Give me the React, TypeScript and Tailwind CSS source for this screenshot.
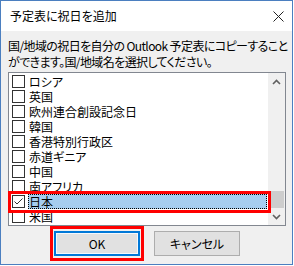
import React from "react";

const countries = [
  "ロシア",
  "英国",
  "欧州連合創設記念日",
  "韓国",
  "香港特別行政区",
  "赤道ギニア",
  "中国",
  "南アフリカ",
  "日本",
  "米国",
];

const Checkbox = ({ checked }: { checked: boolean }) => (
  <div className="w-[13px] h-[13px] shrink-0 border border-[#333333] bg-white flex items-center justify-center">
    {checked && (
      <svg width="11" height="11" viewBox="0 0 11 11">
        <polyline points="1.5,5.5 4,8 9.5,2.5" fill="none" stroke="#333333" strokeWidth="1" />
      </svg>
    )}
  </div>
);

const Chevron = ({ up }: { up: boolean }) => (
  <svg width="9" height="6" viewBox="0 0 9 6">
    <polyline
      points={up ? "1,5 4.5,1.5 8,5" : "1,1 4.5,4.5 8,1"}
      fill="none"
      stroke="#606060"
      strokeWidth="1.6"
    />
  </svg>
);

export default function App() {
  const selected = "日本";

  return (
    <div className="relative w-[293px] h-[265px] border border-[#4b7fc0] bg-[#f0f0f0] flex flex-col font-['Noto_Sans_CJK_JP',sans-serif] [font-feature-settings:'palt'] text-black">
      {/* title bar */}
      <div className="h-[30px] shrink-0 bg-white flex items-center justify-between pl-[9px] pr-[8px]">
        <span className="text-[12px] leading-[16px]">予定表に祝日を追加</span>
        <svg width="11" height="11" viewBox="0 0 11 11">
          <path d="M0.5 0.5 L10.5 10.5 M10.5 0.5 L0.5 10.5" stroke="#222222" strokeWidth="1" />
        </svg>
      </div>

      <div className="flex-1 flex flex-col pl-[7px] pr-[6px] pt-[7px]">
        <p className="text-[12px] leading-[16px] tracking-[-0.6px] whitespace-nowrap">
          国/地域の祝日を自分の Outlook 予定表にコピーすること
          <br />
          ができます。国/地域名を選択してください。
        </p>

        {/* list box */}
        <div className="mt-[2px] h-[154px] border border-[#828790] bg-white flex">
          <div className="flex-1 overflow-hidden pt-[1px]">
            {countries.map((name) => {
              const isSel = name === selected;
              return (
                <div key={name} className="h-[15px] flex items-center pl-[3px] pr-[1px]">
                  <Checkbox checked={isSel} />
                  <div
                    className={
                      isSel
                        ? "ml-[3px] flex-1 h-[15px] border border-dotted border-black bg-[#a6cdef] text-[12px] leading-[13px] whitespace-nowrap"
                        : "ml-[3px] flex-1 h-[15px] border border-transparent text-[12px] leading-[13px] whitespace-nowrap"
                    }
                  >
                    {name}
                  </div>
                </div>
              );
            })}
          </div>
          <div className="w-[17px] bg-[#f0f0f0] flex flex-col">
            <div className="h-[17px] flex items-center justify-center">
              <Chevron up />
            </div>
            <div className="flex-1 flex flex-col justify-end px-[1px]">
              <div className="h-[17px] bg-[#cdcdcd]" />
            </div>
            <div className="h-[17px] flex items-center justify-center">
              <Chevron up={false} />
            </div>
          </div>
        </div>

        {/* buttons */}
        <div className="mt-[5px] flex justify-center gap-[14px]">
          <button className="w-[86px] h-[25px] border-2 border-[#0078d7] bg-[#e1e1e1] shadow-[inset_0_0_0_1px_#f4f8fc] text-[12px] leading-[16px]">
            OK
          </button>
          <button className="w-[86px] h-[25px] border border-[#adadad] bg-[#e1e1e1] text-[12px] leading-[16px]">
            キャンセル
          </button>
        </div>
      </div>

      {/* red highlight annotations */}
      <div className="absolute left-[7px] top-[190px] w-[263px] h-[22px] border-[3px] border-[#ff0000]" />
      <div className="absolute left-[49px] top-[225px] w-[94px] h-[35px] border-[3px] border-[#ff0000]" />
    </div>
  );
}
